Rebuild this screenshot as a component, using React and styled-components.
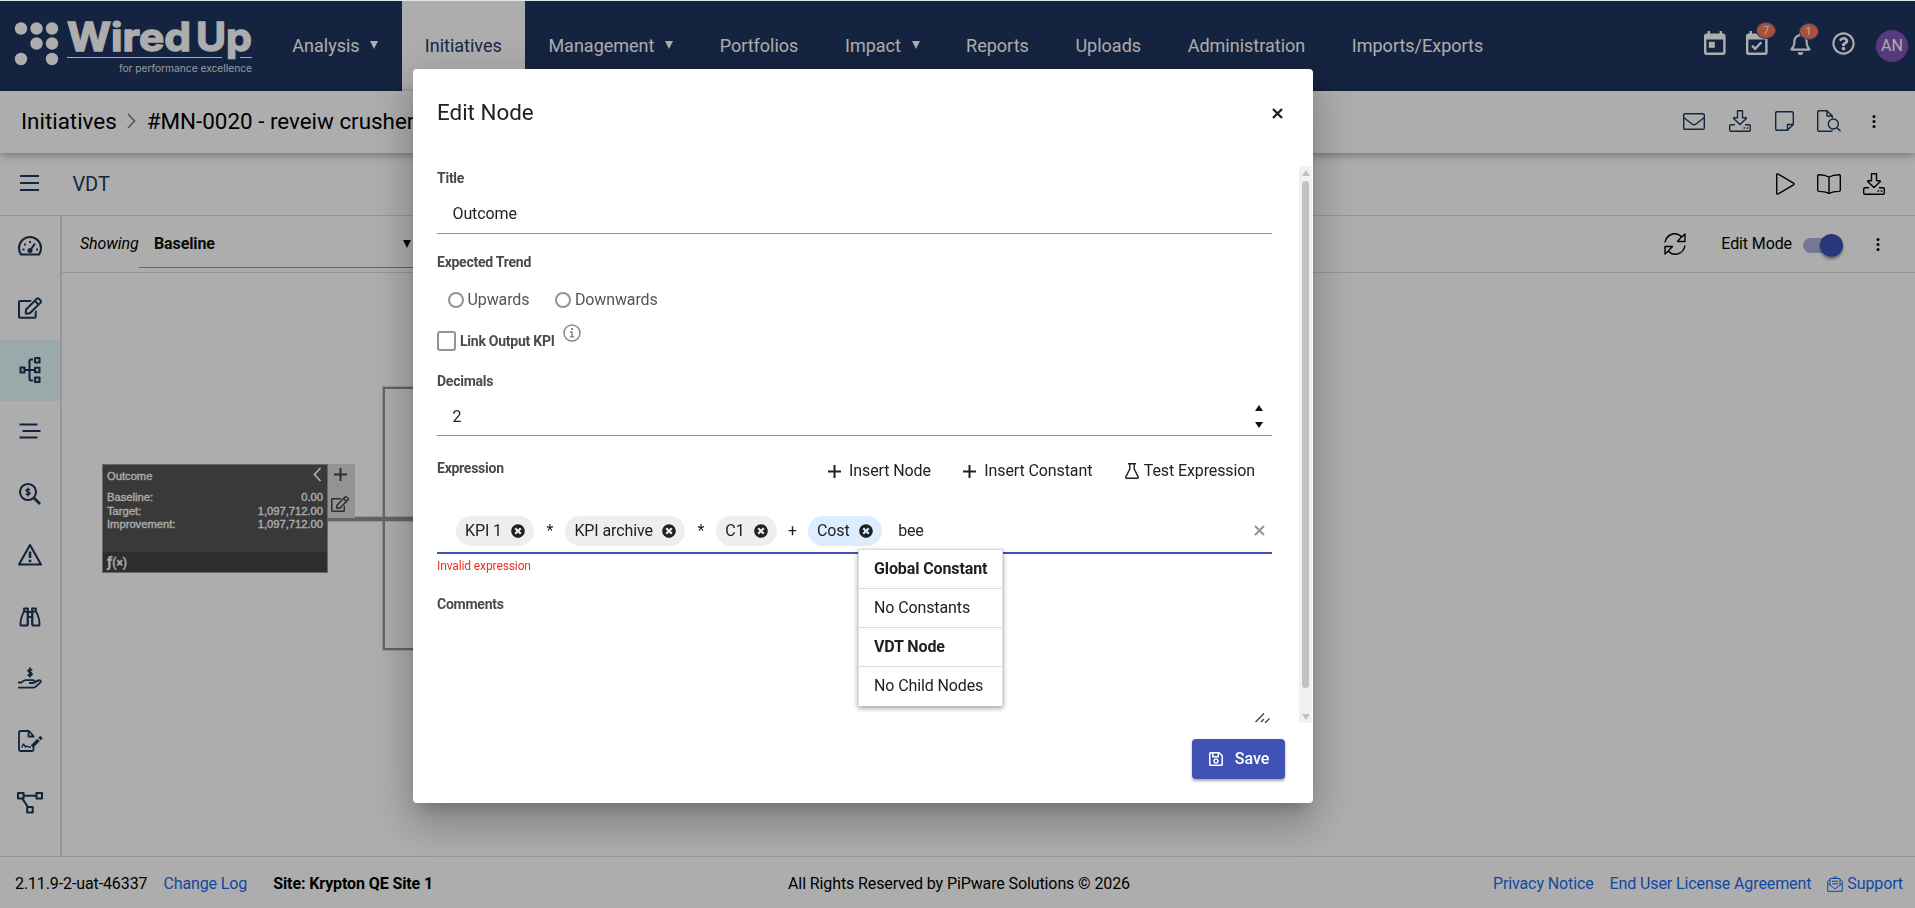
import styled, { createGlobalStyle, css } from 'styled-components';
import {
  FaRegBell,
  FaRegEdit,
  FaRegQuestionCircle,
  FaRegSave,
  FaTimesCircle,
} from 'react-icons/fa';

export default function App() {
  return (
    <>
      <GlobalStyle />
      <Page>
        <Header>
          <Logo />
          <Nav>
            {navItems.map(item => (
              <NavItem key={item.label} $active={item.active}>
                {item.label}
                {item.menu && <Caret $gap={10.6} />}
              </NavItem>
            ))}
          </Nav>
          <HeaderIcons>
            <IconSlot>
              <CalendarIcon />
            </IconSlot>
            <IconSlot>
              <CalendarIcon checked />
              <Badge>7</Badge>
            </IconSlot>
            <IconSlot>
              <FaRegBell size={23} />
              <Badge>1</Badge>
            </IconSlot>
            <IconSlot>
              <FaRegQuestionCircle size={23} />
            </IconSlot>
            <Avatar>AN</Avatar>
          </HeaderIcons>
        </Header>

        <TitleBar>
          <Breadcrumb>
            Initiatives
            <svg width="9" height="16" viewBox="0 0 9 16">
              <path d="M1 1l6.5 7L1 15" fill="none" stroke="#7d8597" strokeWidth="1.8" />
            </svg>
            #MN-0020 - reveiw crusher
          </Breadcrumb>
          <TitleActions>
            <LineIcon name="mail" />
            <LineIcon name="download" />
            <LineIcon name="note" />
            <LineIcon name="fileSearch" />
            <LineIcon name="dots" />
          </TitleActions>
        </TitleBar>

        <SubBar>
          <MenuIcon>
            <i />
            <i />
            <i />
          </MenuIcon>
          <SubTitle>VDT</SubTitle>
          <SubActions>
            <LineIcon name="play" />
            <LineIcon name="book" />
            <LineIcon name="download" />
          </SubActions>
        </SubBar>

        <Content>
          <Sidebar>
            {sideItems.map(name => (
              <SideItem key={name} $active={name === 'tree'}>
                {name === 'edit' ? <FaRegEdit size={24} /> : <SideIcon name={name} />}
              </SideItem>
            ))}
          </Sidebar>
          <Main>
            <FilterBar>
              <Showing>Showing</Showing>
              <Select>
                Baseline
                <Caret />
              </Select>
              <FilterActions>
                <LineIcon name="sync" />
                <EditMode>Edit Mode</EditMode>
                <Toggle>
                  <span />
                </Toggle>
                <LineIcon name="dots" />
              </FilterActions>
            </FilterBar>
            <Canvas>
              <TreeLink $x={266} $y={244} $w={90} $h={3} />
              <TreeLink $x={321} $y={114} $w={120} $h={263} />
              <Node>
                <NodeBody>
                  <NodeTitle>
                    Outcome
                    <svg width="9" height="15" viewBox="0 0 9 15">
                      <path d="M7.5 1L1.5 7.5l6 6.5" fill="none" stroke="#fff" strokeWidth="1.8" />
                    </svg>
                  </NodeTitle>
                  {nodeValues.map(([label, value]) => (
                    <NodeRow key={label}>
                      <span>{label}</span>
                      <span>{value}</span>
                    </NodeRow>
                  ))}
                </NodeBody>
                <NodeFooter>
                  ƒ<small>(×)</small>
                </NodeFooter>
              </Node>
              <NodeTools>
                <PlusIcon size={13} />
                <FaRegEdit size={18} />
              </NodeTools>
            </Canvas>
          </Main>
        </Content>

        <Footer>
          <FooterLeft>
            <span>2.11.9-2-uat-46337</span>
            <FooterLink>Change Log</FooterLink>
            <Site>Site: Krypton QE Site 1</Site>
          </FooterLeft>
          <span>All Rights Reserved by PiPware Solutions © 2026</span>
          <FooterRight>
            <FooterLink>Privacy Notice</FooterLink>
            <FooterLink>End User License Agreement</FooterLink>
            <FooterLink>
              <svg width="16" height="16" viewBox="0 0 16 16" fill="none" stroke="currentColor">
                <path d="M3 3.5L.7 5.3v10h14.6v-10L13 3.5M.7 7.5L8 12.8l7.3-5.3M3 9V2.5h10V9M5.5 2.3L8 .6l2.5 1.7M5 5.2h6M5 7.8h6" />
              </svg>
              Support
            </FooterLink>
          </FooterRight>
        </Footer>
      </Page>

      <Overlay>
        <Dialog>
          <DialogHeader>
            <DialogTitle>Edit Node</DialogTitle>
            <CrossIcon size={11} width={2.4} />
          </DialogHeader>
          <DialogBody>
            <Form>
              <Label>Title</Label>
              <Input $height={44}>Outcome</Input>

              <Label $top={16}>Expected Trend</Label>
              <Radios>
                <Radio>
                  <i />
                  Upwards
                </Radio>
                <Radio>
                  <i />
                  Downwards
                </Radio>
              </Radios>
              <CheckRow>
                <Checkbox />
                <Label>Link Output KPI</Label>
                <InfoIcon />
              </CheckRow>

              <Label $top={13}>Decimals</Label>
              <Input $height={43}>
                2
                <Spinner>
                  <Caret $up />
                  <Caret />
                </Spinner>
              </Input>

              <ExpressionHead>
                <Label>Expression</Label>
                <Tools>
                  <Tool $gap={8}>
                    <PlusIcon size={13} />
                    Insert Node
                  </Tool>
                  <Tool $gap={8}>
                    <PlusIcon size={13} />
                    Insert Constant
                  </Tool>
                  <Tool $gap={5}>
                    <FlaskIcon />
                    Test Expression
                  </Tool>
                </Tools>
              </ExpressionHead>
              <Expression>
                {tokens.map((token, i) =>
                  token.op ? (
                    <Operator key={i}>{token.op}</Operator>
                  ) : (
                    <Chip key={i} $blue={token.blue}>
                      {token.label}
                      <FaTimesCircle size={14} />
                    </Chip>
                  ),
                )}
                <Typed>bee</Typed>
                <Clear>
                  <CrossIcon size={11} width={2} />
                </Clear>
                <Suggestions>
                  <Suggestion $head>Global Constant</Suggestion>
                  <Suggestion>No Constants</Suggestion>
                  <Suggestion $head>VDT Node</Suggestion>
                  <Suggestion>No Child Nodes</Suggestion>
                </Suggestions>
              </Expression>
              <ErrorText>Invalid expression</ErrorText>

              <Label $top={14}>Comments</Label>
              <TextArea>
                <svg width="15" height="10" viewBox="0 0 15 10" stroke="#444" strokeWidth="1.4">
                  <path d="M.5 9L9 .5M6 9l3-3M10 10l4.5-4.5" />
                </svg>
              </TextArea>
            </Form>
            <Scrollbar>
              <ScrollArrow $up />
              <Thumb />
              <ScrollArrow />
            </Scrollbar>
          </DialogBody>
          <DialogFooter>
            <SaveButton>
              <FaRegSave size={16} />
              Save
            </SaveButton>
          </DialogFooter>
        </Dialog>
      </Overlay>
    </>
  );
}

function Logo() {
  return (
    <svg width="269" height="90" viewBox="0 1 269 90" fill="#fff">
      {logoDots.map(([x, y]) => (
        <circle key={`${x}-${y}`} cx={x} cy={y} r="6.2" />
      ))}
      <g fontFamily="Inter" fontWeight="700" fontSize="39" stroke="#fff" strokeWidth="1.3">
        <text x="67" y="50.5" textLength="124" lengthAdjust="spacingAndGlyphs">
          Wired
        </text>
        <text x="196" y="50.5" textLength="56" lengthAdjust="spacingAndGlyphs">
          Up
        </text>
      </g>
      <path d="M67 57.5h155M240 57.5h12" stroke="#fff" strokeWidth="1" />
      <text
        x="119"
        y="72"
        fontFamily="Inter"
        fontSize="10.5"
        opacity="0.85"
        textLength="133"
        lengthAdjust="spacingAndGlyphs"
      >
        for performance excellence
      </text>
    </svg>
  );
}

function CalendarIcon({ checked }) {
  return (
    <svg width="21.6" height="24" viewBox="3 1 18 20" fill="currentColor">
      <path d="M19 3h-1V1h-2v2H8V1H6v2H5c-1.1 0-2 .9-2 2v14c0 1.1.9 2 2 2h14c1.1 0 2-.9 2-2V5c0-1.1-.9-2-2-2zm0 16H5V8h14v11z" />
      {checked ? (
        <path d="M8 13.2l2.6 2.6 5.2-5.4" fill="none" stroke="currentColor" strokeWidth="2" />
      ) : (
        <path d="M7 10h5v5H7z" />
      )}
    </svg>
  );
}

function PlusIcon({ size }) {
  return (
    <svg width={size} height={size} viewBox="0 0 13 13">
      <path d="M6.5 0v13M0 6.5h13" stroke="currentColor" strokeWidth="2" />
    </svg>
  );
}

function CrossIcon({ size, width }) {
  return (
    <svg width={size} height={size} viewBox="0 0 11 11">
      <path d="M1 1l9 9M10 1l-9 9" stroke="currentColor" strokeWidth={width} />
    </svg>
  );
}

function FlaskIcon() {
  return (
    <svg width="14" height="16" viewBox="0 0 14 16" fill="none" stroke="currentColor">
      <path d="M3 .8h8M4.8 1v5.2L.9 13.6c-.4.8 0 1.6.9 1.6h10.4c.9 0 1.3-.8.9-1.6L9.2 6.2V1" strokeWidth="1.4" />
    </svg>
  );
}

function InfoIcon() {
  return (
    <svg width="18" height="18" viewBox="0 0 18 18" fill="none" stroke="#8a8a8a">
      <circle cx="9" cy="9" r="8" strokeWidth="1.5" />
      <path d="M7 8h2v4.6M6.8 12.8h4.4" strokeWidth="1.5" />
      <path d="M8 5h2" strokeWidth="2" />
    </svg>
  );
}

function LineIcon({ name }) {
  const [width, height, shape] = lineIcons[name];
  return (
    <svg
      width={width}
      height={height}
      viewBox={`0 0 ${width} ${height}`}
      fill="none"
      stroke="currentColor"
      strokeWidth="1.4"
      strokeLinejoin="round"
    >
      {shape}
    </svg>
  );
}

function SideIcon({ name }) {
  return (
    <svg
      width="28"
      height="28"
      viewBox="0 0 28 28"
      fill="none"
      stroke="currentColor"
      strokeWidth="2.1"
      strokeLinejoin="round"
    >
      {sideIcons[name]}
    </svg>
  );
}

const navItems = [
  { label: 'Analysis', menu: true },
  { label: 'Initiatives', active: true },
  { label: 'Management', menu: true },
  { label: 'Portfolios' },
  { label: 'Impact', menu: true },
  { label: 'Reports' },
  { label: 'Uploads' },
  { label: 'Administration' },
  { label: 'Imports/Exports' },
];

const logoDots = [
  [21, 28.5],
  [36.5, 28.5],
  [52, 28.5],
  [36.5, 43.5],
  [52, 43.5],
  [21, 59],
  [52, 59],
];

const sideItems = [
  'gauge',
  'edit',
  'tree',
  'lines',
  'searchDollar',
  'warning',
  'binoculars',
  'hand',
  'signature',
  'diagram',
];

const nodeValues = [
  ['Baseline:', '0.00'],
  ['Target:', '1,097,712.00'],
  ['Improvement:', '1,097,712.00'],
];

const tokens = [
  { label: 'KPI 1' },
  { op: '*' },
  { label: 'KPI archive' },
  { op: '*' },
  { label: 'C1' },
  { op: '+' },
  { label: 'Cost', blue: true },
];

const lineIcons = {
  mail: [22, 17, <path d="M2 .7h18q1.3 0 1.3 1.3v13q0 1.3-1.3 1.3H2Q.7 16.3.7 15V2Q.7.7 2 .7zM.7 4.5L9 11q2 1.4 4 0l8.3-6.5" />],
  download: [
    22,
    22,
    <>
      <path d="M8.5.7h5v7h3.3q.9.3.3 1.1L11 14.5 4.9 8.8q-.6-.8.3-1.1h3.3zM6 14.7H2q-1.3 0-1.3 1.3v4q0 1.3 1.3 1.3h18q1.3 0 1.3-1.3v-4q0-1.3-1.3-1.3h-4" />
      <path d="M14.5 18h1.6M17.7 18h1.6" />
    </>,
  ],
  note: [19, 20, <path d="M2 .7h15q1.3 0 1.3 1.3v11.5l-5.8 5.8H2Q.7 19.3.7 18V2Q.7.7 2 .7zM18.3 13.5h-5.8v5.8" />],
  fileSearch: [
    24,
    22,
    <>
      <path d="M15.3 8V6L10 .7H2Q.7.7.7 2v18q0 1.3 1.3 1.3h12q1.3 0 1.3-1M10 .7V6h5.3" />
      <circle cx="16.3" cy="14" r="5" />
      <path d="M20 17.7l3.5 3.6" />
    </>,
  ],
  dots: [
    4,
    13,
    <g fill="currentColor" stroke="none">
      <circle cx="2" cy="1.5" r="1.5" />
      <circle cx="2" cy="6.5" r="1.5" />
      <circle cx="2" cy="11.5" r="1.5" />
    </g>,
  ],
  play: [19, 22, <path d="M.7 2Q.7.3 2.2 1.1l15.3 9q1.2.9 0 1.8l-15.3 9Q.7 21.7.7 20z" />],
  book: [
    24,
    20,
    <path d="M12 3Q8 .8 2 .7.7.7.7 2v14q0 1.3 1.3 1.4 6 .2 10 1.9 4-1.7 10-1.9 1.3-.1 1.3-1.4V2Q23.3.7 22 .7 16 .8 12 3zM12 3v16.3" />,
  ],
  sync: [
    22,
    22,
    <path d="M1 9.5Q2 3 8.5 1q5.5-1.2 9.3 3L21 1v7.5h-7.5L17.3 4M21 12.5Q20 19 13.5 21q-5.5 1.2-9.3-3L1 21v-7.5h7.5L4.2 18" />,
  ],
};

const sideIcons = {
  gauge: (
    <>
      <path d="M5 22.5Q3 20 3 16a11 11 0 0 1 22 0q0 4-2 6.5z" />
      <circle cx="14" cy="18.5" r="2.5" fill="currentColor" stroke="none" />
      <path d="M14 18.5l5-7" />
      <path d="M6.5 17.5h2M8 12.5h2M13 10h2M20 17.5h2" />
    </>
  ),
  tree: (
    <>
      <path d="M4.5 11.5h4v5h-4zM19 2h4.5v4.5H19zM19 11.7h4.5v4.5H19zM19 21.5h4.5V26H19z" />
      <path d="M9 14h9M17 3.5h-2q-1.5 0-1.5 1.5v18q0 1.5 1.5 1.5h2" />
    </>
  ),
  lines: <path d="M3.5 6.5h18M6.5 13h18M3.5 19.5h18" strokeWidth="2.2" />,
  searchDollar: (
    <>
      <circle cx="12" cy="12" r="8" />
      <path d="M18 18l6 6" strokeWidth="2.6" />
      <path d="M14.2 9.8q-2.2-1.2-3.7-.3-1.3 1.5 1.5 2.3t1.7 2.3q-1.6 1.3-4-.2M12 7.5v9" strokeWidth="1.4" />
    </>
  ),
  warning: (
    <>
      <path d="M14 4L3 23.5h22z" />
      <path d="M14 10.5V17M14 18.7v2.6" strokeWidth="2.6" />
    </>
  ),
  binoculars: (
    <>
      <path d="M8 8.500Q4 16 4.500 22.500h7V8.500zM20 8.500q4 7.500 3.500 14h-7V8.500zM8 8V5.500h4V22M20 8V5.500h-4V22M12 9h4M12 14h4" strokeWidth="1.8" />
    </>
  ),
  hand: (
    <>
      <path d="M2 17.5h3.5q2-2.500 4.500-2.300h7q1.500 0 1.500 1.300t-1.500 1.500h-4M18 18q3.500-3 6-2.700 1.500 1 .2 2.300l-4.700 4.200q-1 .9-2.500.9H2" strokeWidth="1.8" />
      <path d="M16.3 5.200q-2.200-1-3.700-.2-1.300 1.500 1.400 2.400t1.700 2.400q-1.600 1.200-4.100-.2M14 2.500v10" strokeWidth="1.8" />
    </>
  ),
  signature: (
    <>
      <path d="M17.5 10.5V9L13 4H4.5Q3 4 3 5.5v17Q3 24 4.5 24H16q1.5 0 1.5-1.5V19M12.5 4.5v5h5" strokeWidth="1.8" />
      <path d="M5.5 20.500l2-3.500 2 3 1.500-1 1.500 1h2.500" strokeWidth="1.4" />
      <path d="M16 19.5l6.5-6.5M23.5 12l2-2" strokeWidth="3.4" />
    </>
  ),
  diagram: (
    <>
      <path d="M2 4h5.500v5.500H2zM20.500 4H26v5.500h-5.500zM11.200 18h5.500v5.500h-5.500z" />
      <path d="M8 6.700h12M6.500 10l5.500 8" />
    </>
  ),
};

const GlobalStyle = createGlobalStyle`
  * {
    box-sizing: border-box;
  }
  body {
    margin: 0;
    overflow: hidden;
    font: 16px/1.5 Roboto, sans-serif;
    letter-spacing: -0.11px;
    color: #000;
  }
  svg {
    display: block;
    flex: none;
  }
`;

const Page = styled.div`
  display: flex;
  flex-direction: column;
  height: 908px;
  border-top: 1px solid #dfe8df;
  background: #fff;
`;

const Header = styled.header`
  display: flex;
  flex: none;
  height: 90px;
  background: #1e345d;
  letter-spacing: 0;
`;

const Nav = styled.nav`
  display: flex;
`;

const NavItem = styled.div`
  display: flex;
  align-items: center;
  padding: 0 23.3px 2px;
  font-size: 18px;
  color: #fff;
  ${({ $active }) =>
    $active &&
    css`
      background: #fff;
      color: #1e3a5f;
    `}
`;

const Caret = styled.i`
  flex: none;
  width: 0;
  height: 0;
  margin-left: ${({ $gap }) => $gap || 0}px;
  border: 4.5px solid transparent;
  border-top: 8px solid currentColor;
  border-bottom: 0;
  ${({ $up }) => $up && 'transform: rotate(180deg);'}
`;

const HeaderIcons = styled.div`
  display: flex;
  align-items: center;
  gap: 20.7px;
  margin-left: auto;
  padding-right: 7px;
  color: #fff;
`;

const IconSlot = styled.div`
  position: relative;
  margin-top: -6px;
`;

const Badge = styled.span`
  position: absolute;
  top: -9px;
  left: 10px;
  width: 20px;
  height: 17px;
  border: 1px solid #4a4a9a;
  border-radius: 50%;
  background: #f8794f;
  font-size: 11px;
  line-height: 15px;
  text-align: center;
`;

const Avatar = styled.div`
  width: 32px;
  height: 32px;
  border-radius: 50%;
  background: #8055b8;
  font-size: 16px;
  line-height: 32px;
  text-align: center;
`;

const TitleBar = styled.div`
  display: flex;
  flex: none;
  align-items: center;
  justify-content: space-between;
  height: 62px;
  padding: 0 39px 1px 21px;
  background: #fff;
  box-shadow: 0 2px 8px rgba(0, 0, 0, 0.35);
  z-index: 1;
`;

const Breadcrumb = styled.div`
  display: flex;
  align-items: center;
  gap: 10.5px;
  font-size: 22.4px;
  letter-spacing: 0;
`;

const TitleActions = styled.div`
  display: flex;
  align-items: center;
  gap: 23.7px;
  padding-bottom: 1px;
  color: #1e3a5f;

  svg:last-child {
    margin-left: 7px;
    color: #000;
  }
`;

const SubBar = styled.div`
  display: flex;
  flex: none;
  align-items: center;
  height: 63px;
  padding: 0 30px 1px 20px;
  border-bottom: 1px solid #ddd;
`;

const MenuIcon = styled.div`
  display: flex;
  flex-direction: column;
  gap: 5px;
  width: 19px;
  margin: 0 33.5px 1px 0;

  i {
    height: 2px;
    background: #1e3a5f;
  }
`;

const SubTitle = styled.div`
  font-size: 20px;
  color: #1e3a5f;
`;

const SubActions = styled.div`
  display: flex;
  align-items: center;
  gap: 22px;
  margin-left: auto;
`;

const Content = styled.div`
  display: flex;
  flex: 1;
  min-height: 0;
`;

const Sidebar = styled.aside`
  width: 62px;
  border-right: 2px solid #ddd;
`;

const SideItem = styled.div`
  display: flex;
  align-items: center;
  justify-content: center;
  height: 61.8px;
  padding-bottom: 1px;
  color: #1b3758;
  background: ${({ $active }) => ($active ? '#e3fafa' : 'transparent')};
`;

const Main = styled.main`
  flex: 1;
  display: flex;
  flex-direction: column;
`;

const FilterBar = styled.div`
  display: flex;
  align-items: center;
  height: 57px;
  padding: 0 35px 0 18px;
  border-bottom: 1px solid #ddd;
`;

const Showing = styled.span`
  width: 59px;
  font-style: italic;
`;

const Select = styled.div`
  display: flex;
  align-items: center;
  justify-content: space-between;
  width: 285px;
  height: 40px;
  margin-top: 7px;
  padding: 0 13px 7px 15px;
  border-bottom: 1px solid #949494;
  font-weight: 700;
  color: #111;
`;

const FilterActions = styled.div`
  display: flex;
  align-items: center;
  margin-left: auto;
`;

const EditMode = styled.span`
  margin: 0 11px 0 35px;
`;

const Toggle = styled.div`
  display: flex;
  align-items: center;
  justify-content: flex-end;
  width: 36px;
  height: 15px;
  margin: 2px 37px 0 0;
  border-radius: 8px;
  background: #abb2de;

  span {
    width: 23px;
    height: 23px;
    margin-right: -4px;
    border-radius: 50%;
    background: #3f51b5;
    box-shadow: 0 2px 3px rgba(0, 0, 0, 0.4);
  }
`;

const Canvas = styled.div`
  position: relative;
  flex: 1;
  overflow: hidden;
`;

const TreeLink = styled.div`
  position: absolute;
  left: ${({ $x }) => $x}px;
  top: ${({ $y }) => $y}px;
  width: ${({ $w }) => $w}px;
  height: ${({ $h }) => $h}px;
  border: 2px solid #939393;
  box-shadow: 0 0 0 0.5px #b5b5b5;
`;

const Node = styled.div`
  position: absolute;
  left: 40px;
  top: 191px;
  width: 226px;
  height: 109px;
  border: 1px solid #999;
  background: #555;
  font: 11.2px/13.5px 'Liberation Sans', sans-serif;
  -webkit-text-stroke: 0.3px #fff;
  letter-spacing: 0;
  color: #fff;
`;

const NodeBody = styled.div`
  height: 87px;
  padding: 3px 4px 0;
`;

const NodeTitle = styled.div`
  display: flex;
  justify-content: space-between;
  margin-bottom: 6px;
  line-height: 17px;

  svg {
    margin-top: -1px;
    margin-right: 1px;
  }
`;

const NodeRow = styled.div`
  display: flex;
  justify-content: space-between;
`;

const NodeFooter = styled.div`
  height: 20px;
  padding-left: 4px;
  background: #434343;
  font: 500 15px/20px Roboto, sans-serif;

  small {
    font-size: 12px;
  }
`;

const NodeTools = styled.div`
  position: absolute;
  left: 266px;
  top: 191px;
  display: flex;
  flex-direction: column;
  align-items: center;
  justify-content: space-between;
  width: 27px;
  height: 54px;
  padding: 4px 3px 5px 0;
  background: #d9d9d9;
  color: #444;
`;

const Footer = styled.footer`
  display: grid;
  grid-template-columns: 1fr auto 1fr;
  align-items: center;
  flex: none;
  height: 52px;
  padding: 3px 12px 0 15px;
  border-top: 1px solid #ddd;
`;

const FooterLeft = styled.div`
  display: flex;
  gap: 16px;
`;

const FooterRight = styled.div`
  display: flex;
  justify-content: flex-end;
  gap: 16px;
`;

const FooterLink = styled.a`
  display: flex;
  align-items: center;
  gap: 4px;
  color: #1a6bf0;
`;

const Site = styled.b`
  margin-left: 10px;
`;

const Overlay = styled.div`
  position: fixed;
  inset: 1px 0 0;
  padding: 68px 0 0 413px;
  background: rgba(0, 0, 0, 0.32);
  z-index: 10;
`;

const Dialog = styled.div`
  display: flex;
  flex-direction: column;
  width: 900px;
  height: 734px;
  border-radius: 4px;
  background: #fff;
  color: #212121;
  box-shadow:
    0 11px 15px -7px rgba(0, 0, 0, 0.2),
    0 24px 38px 3px rgba(0, 0, 0, 0.14),
    0 9px 46px 8px rgba(0, 0, 0, 0.12);
`;

const DialogHeader = styled.div`
  display: flex;
  align-items: center;
  justify-content: space-between;
  height: 97px;
  padding: 0 30px 9px 24px;
`;

const DialogTitle = styled.h2`
  margin: 0;
  font-size: 22.4px;
  font-weight: 400;
  letter-spacing: 0;
`;

const DialogBody = styled.div`
  display: flex;
  justify-content: space-between;
  height: 557px;
  padding: 0 1px 0 24px;
`;

const Form = styled.div`
  width: 835px;
`;

const Label = styled.div`
  margin-top: ${({ $top }) => $top || 0}px;
  font-size: 14px;
  font-weight: 700;
  line-height: 24px;
  letter-spacing: -0.25px;
  color: #4a4a4a;
`;

const Input = styled.div`
  display: flex;
  align-items: center;
  justify-content: space-between;
  height: ${({ $height }) => $height}px;
  padding: 5px 9px 0 15.5px;
  border-bottom: 1px solid #949494;
`;

const Spinner = styled.div`
  display: flex;
  flex-direction: column;
  gap: 11px;
  color: #111;

  ${Caret} {
    border-top-width: 6px;
  }
`;

const Radios = styled.div`
  display: flex;
  align-items: center;
  gap: 26px;
  height: 31px;
  margin-top: 10px;
  padding-left: 11px;
  color: #555;
`;

const Radio = styled.div`
  display: flex;
  align-items: center;
  gap: 3.5px;

  i {
    width: 16px;
    height: 16px;
    border: 2px solid #949494;
    border-radius: 50%;
  }
`;

const CheckRow = styled.div`
  display: flex;
  align-items: center;
  height: 30px;
  margin-top: 11px;

  svg {
    margin: -16px 0 0 8px;
  }
`;

const Checkbox = styled.div`
  width: 19px;
  height: 20px;
  margin-right: 4px;
  border: 2px solid #949494;
  border-radius: 3px;
`;

const ExpressionHead = styled.div`
  display: flex;
  align-items: center;
  justify-content: space-between;
  height: 36px;
  margin-top: 14px;
`;

const Tools = styled.div`
  display: flex;
  gap: 32.5px;
  padding: 6px 17px 0 0;
`;

const Tool = styled.div`
  display: flex;
  align-items: center;
  gap: ${({ $gap }) => $gap}px;
`;

const Expression = styled.div`
  position: relative;
  display: flex;
  align-items: center;
  height: 68px;
  padding: 23px 7px 0 19px;
  border-bottom: 2px solid #3f51b5;
`;

const Chip = styled.div`
  display: flex;
  align-items: center;
  gap: 9.5px;
  height: 30px;
  padding: 0 9px;
  border-radius: 15px;
  background: ${({ $blue }) => ($blue ? '#dbedff' : '#eeeeee')};
`;

const Operator = styled.span`
  width: 31px;
  text-align: center;
`;

const Typed = styled.span`
  margin-left: 16px;
`;

const Clear = styled.div`
  margin-left: auto;
  color: #949494;
`;

const Suggestions = styled.div`
  position: absolute;
  left: 421px;
  top: 63px;
  width: 145px;
  border: 1px solid #ddd;
  border-width: 1px 1px 0;
  background: #fff;
  box-shadow: 0 2px 5px rgba(0, 0, 0, 0.4);
  z-index: 2;
`;

const Suggestion = styled.div`
  height: 39px;
  padding-left: 15px;
  border-bottom: 1px solid #ddd;
  line-height: 37px;
  font-weight: ${({ $head }) => ($head ? 700 : 400)};

  &:last-child {
    border-bottom: 0;
  }
`;

const ErrorText = styled.div`
  font-size: 12px;
  line-height: 24px;
  color: #f02c1d;
`;

const TextArea = styled.div`
  display: flex;
  align-items: flex-end;
  justify-content: flex-end;
  height: 107px;
  padding-right: 2px;
`;

const Scrollbar = styled.div`
  display: flex;
  flex-direction: column;
  align-items: center;
  width: 13px;
  padding: 4px 0 3px;
  background: #f1f1f1;
`;

const ScrollArrow = styled.i`
  border: 4.5px solid transparent;
  border-top: 6px solid #c1c1c1;
  border-bottom: 0;
  ${({ $up }) => $up && 'transform: rotate(180deg);'}
`;

const Thumb = styled.div`
  width: 7px;
  height: 507px;
  margin: 5px 0 auto;
  border-radius: 4px;
  background: #c1c1c1;
`;

const DialogFooter = styled.div`
  display: flex;
  justify-content: flex-end;
  padding: 16px 28px;
`;

const SaveButton = styled.button`
  display: flex;
  align-items: center;
  justify-content: center;
  gap: 11px;
  width: 93px;
  height: 40px;
  padding: 0 0 1px;
  border: 0;
  border-radius: 4px;
  background: #3f51b5;
  box-shadow: 0 2px 3px rgba(0, 0, 0, 0.35);
  font: 500 16px Roboto, sans-serif;
  color: #fff;
`;
